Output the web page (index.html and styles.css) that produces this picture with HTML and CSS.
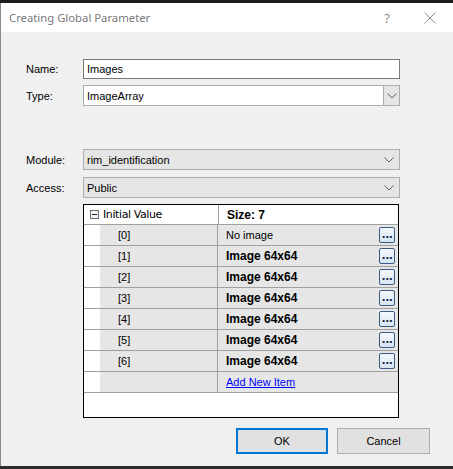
FILE: index.html
```html
<!DOCTYPE html>
<html>
<head>
<meta charset="utf-8">
<link rel="stylesheet" href="styles.css">
</head>
<body>
<div class="topstrip"></div>
<div class="window">
  <div class="titlebar">
    <span class="title">Creating Global Parameter</span>
    <span class="help">?</span>
    <span class="close">
      <svg width="12" height="12" viewBox="0 0 12 12"><path d="M0.5 0.5 L11.5 11.5 M11.5 0.5 L0.5 11.5" stroke="#8c8c8c" stroke-width="1" fill="none"/></svg>
    </span>
  </div>
  <div class="client">
    <div class="row r-name">
      <label class="lbl">Name:</label>
      <div class="textbox">Images</div>
    </div>
    <div class="row r-type">
      <label class="lbl">Type:</label>
      <div class="combo editable">
        <span class="ctext">ImageArray</span>
        <span class="dropbtn"><svg width="10" height="6" viewBox="0 0 10 6"><path d="M0.5 0.5 L5 5 L9.5 0.5" stroke="#606060" fill="none"/></svg></span>
      </div>
    </div>
    <div class="row r-module">
      <label class="lbl">Module:</label>
      <div class="combo list">
        <span class="ctext">rim_identification</span>
        <span class="arrow"><svg width="10" height="6" viewBox="0 0 10 6"><path d="M0.5 0.5 L5 5 L9.5 0.5" stroke="#606060" fill="none"/></svg></span>
      </div>
    </div>
    <div class="row r-access">
      <label class="lbl">Access:</label>
      <div class="combo list">
        <span class="ctext">Public</span>
        <span class="arrow"><svg width="10" height="6" viewBox="0 0 10 6"><path d="M0.5 0.5 L5 5 L9.5 0.5" stroke="#606060" fill="none"/></svg></span>
      </div>
    </div>
    <div class="grid">
      <div class="grow head">
        <div class="gname"><span class="minus"></span>Initial Value</div>
        <div class="gval bold">Size: 7</div>
      </div>
      <div class="grow item">
        <div class="margin"></div>
        <div class="gname idx">[0]</div>
        <div class="gval">No image<span class="ell">...</span></div>
      </div>
      <div class="grow item">
        <div class="margin"></div>
        <div class="gname idx">[1]</div>
        <div class="gval bold">Image 64x64<span class="ell">...</span></div>
      </div>
      <div class="grow item">
        <div class="margin"></div>
        <div class="gname idx">[2]</div>
        <div class="gval bold">Image 64x64<span class="ell">...</span></div>
      </div>
      <div class="grow item">
        <div class="margin"></div>
        <div class="gname idx">[3]</div>
        <div class="gval bold">Image 64x64<span class="ell">...</span></div>
      </div>
      <div class="grow item">
        <div class="margin"></div>
        <div class="gname idx">[4]</div>
        <div class="gval bold">Image 64x64<span class="ell">...</span></div>
      </div>
      <div class="grow item">
        <div class="margin"></div>
        <div class="gname idx">[5]</div>
        <div class="gval bold">Image 64x64<span class="ell">...</span></div>
      </div>
      <div class="grow item">
        <div class="margin"></div>
        <div class="gname idx">[6]</div>
        <div class="gval bold">Image 64x64<span class="ell">...</span></div>
      </div>
      <div class="grow item">
        <div class="margin"></div>
        <div class="gname idx"></div>
        <div class="gval"><a class="link" href="#">Add New Item</a></div>
      </div>
    </div>
    <div class="buttons">
      <button class="btn default">OK</button>
      <button class="btn">Cancel</button>
    </div>
  </div>
</div>
<div class="bottomstrip"></div>
</body>
</html>
```
FILE: styles.css
```css
html, body {
  margin: 0;
  padding: 0;
  width: 453px;
  height: 469px;
  overflow: hidden;
  background: #f0f0f0;
  font-family: "Liberation Sans", Arial, sans-serif;
  font-size: 11px;
  color: #000;
}
.topstrip {
  height: 3px;
  background: #1c1c1c;
}
.window {
  height: 463px;
  border-left: 1px solid #8a8a8a;
  display: flex;
  flex-direction: column;
}
.titlebar {
  height: 29px;
  background: #fff;
  display: flex;
  align-items: center;
}
.title {
  font-family: "Noto Sans", "Open Sans", sans-serif;
  font-size: 11.3px;
  color: #7a7a7a;
  margin-left: 8px;
  flex: 1;
}
.help {
  font-family: "Noto Sans", sans-serif;
  font-size: 13px;
  color: #8c8c8c;
  margin-right: 34px;
}
.close {
  display: flex;
  margin-right: 17px;
}
.client {
  flex: 1;
  background: #f0f0f0;
  padding-left: 25px;
}
.row {
  display: flex;
  align-items: center;
}
.lbl {
  width: 57px;
}
.r-name { margin-top: 27px; }
.r-type { margin-top: 6px; }
.r-module { margin-top: 43px; }
.r-access { margin-top: 7px; }
.textbox {
  width: 312px;
  height: 18px;
  border: 1px solid #7a7a7a;
  background: #fff;
  line-height: 18px;
  padding-left: 3px;
}
.combo {
  width: 314px;
  height: 19px;
  border: 1px solid #adadad;
  display: flex;
  align-items: center;
  padding-left: 1px;
}
.combo.editable {
  background: #fff;
}
.combo.list {
  background: #e5e5e5;
}
.ctext {
  flex: 1;
  padding-left: 2px;
}
.dropbtn {
  width: 15px;
  height: 19px;
  background: #e5e5e5;
  border-left: 1px solid #adadad;
  display: flex;
  align-items: center;
  justify-content: center;
}
.arrow {
  width: 16px;
  display: flex;
  justify-content: center;
  margin-right: 2px;
}
.grid {
  margin-top: 6px;
  margin-left: 57px;
  width: 314px;
  height: 212px;
  border: 1px solid #000;
  background: #fff;
  display: flex;
  flex-direction: column;
}
.grow {
  display: flex;
  height: 20px;
  border-bottom: 1px solid #a0a0a0;
}
.grow.head {
  background: #fff;
  height: 19px;
}
.gname {
  width: 134px;
  border-right: 1px solid #a0a0a0;
  display: flex;
  align-items: center;
}
.head .gname {
  width: 128px;
  padding-left: 6px;
  font-family: "DejaVu Sans", sans-serif;
  font-size: 11px;
  letter-spacing: -0.4px;
}
.head .gval {
  font-size: 12px;
}
.minus {
  width: 7px;
  height: 7px;
  border: 1px solid #6e6e6e;
  margin-right: 4px;
  position: relative;
  background: #f4f4f4;
}
.minus::after {
  content: "";
  position: absolute;
  left: 1px;
  top: 3px;
  width: 5px;
  height: 1px;
  background: #222;
}
.margin {
  width: 16px;
  background: #fff;
}
.item {
  background: #e6e6e6;
}
.idx {
  width: 118px;
  padding-left: 18px;
  box-sizing: border-box;
}
.gval {
  flex: 1;
  display: flex;
  align-items: center;
  padding-left: 8px;
  position: relative;
}
.bold {
  font-weight: bold;
  font-size: 12px;
}
.ell {
  position: absolute;
  right: 3px;
  top: 2px;
  width: 14px;
  height: 14px;
  border: 1px solid #3c5a82;
  border-radius: 2px;
  background: linear-gradient(#f4f8fd, #d8e4f3);
  font-weight: bold;
  font-size: 11px;
  line-height: 13px;
  text-align: center;
  color: #1b2b44;
  letter-spacing: -0.5px;
  font-family: "DejaVu Sans", sans-serif;
}
.link {
  color: #0000ff;
  text-decoration: underline;
}
.buttons {
  display: flex;
  margin-top: 10px;
  margin-left: 210px;
  gap: 9px;
}
.btn {
  width: 93px;
  height: 26px;
  background: #e1e1e1;
  border: 1px solid #adadad;
  font-family: "Liberation Sans", Arial, sans-serif;
  font-size: 11px;
  color: #000;
  padding: 0;
}
.btn.default {
  border: 2px solid #0078d7;
  width: 92px;
}
.bottomstrip {
  height: 3px;
  background: #2b2b2b;
}
```
